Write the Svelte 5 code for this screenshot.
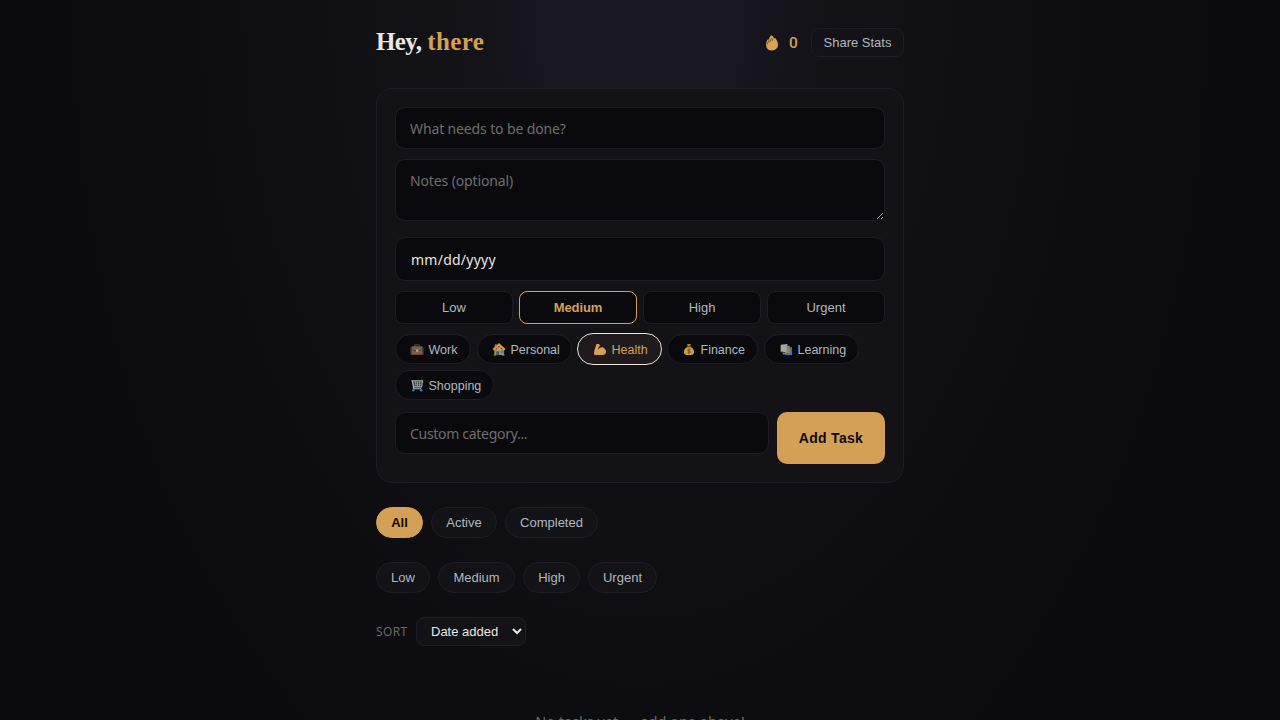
<script>
  const levels = ['Low', 'Medium', 'High', 'Urgent'];
  const levelWidths = [54, 77, 57, 69];
  const categories = [
    { name: 'Work', width: 76 },
    { name: 'Personal', width: 95 },
    { name: 'Health', width: 83 },
    { name: 'Finance', width: 91 },
    { name: 'Learning', width: 95 },
    { name: 'Shopping', width: 99 }
  ];
  const statuses = [
    { name: 'All', width: 47 },
    { name: 'Active', width: 66 },
    { name: 'Completed', width: 93 }
  ];
  let priority = $state('Medium');
  let category = $state('Health');
  let status = $state('All');
  let sort = $state('Date added');
</script>

{#snippet glyph(name)}
  <svg class="glyph" viewBox="0 0 14 14" aria-hidden="true">
    {#if name === 'Work'}
      <path d="M4.5 4V2h5v2" fill="none" stroke="#8a4528" />
      <rect x="1" y="3.5" width="12" height="9" rx="1" fill="#66645c" />
      <path d="M.5 5v7.5M13.5 5v7.5M1 12.5h12" stroke="#8a3e25" />
      <path d="M1 7l5 1.5h2L13 7" fill="none" stroke="#4a4643" />
      <rect x="6" y="7" width="2.5" height="2.5" fill="#d9a04e" />
    {:else if name === 'Personal'}
      <path d="M2.5 1.5h2v3h-2z" fill="#c8792c" />
      <path d="M2 6.5h10.5V13H2z" fill="#95907d" />
      <path d="M.8 7.5L7 1.8l6.2 5.7" fill="none" stroke="#d69540" stroke-width="2.6" />
      <path d="M5 4.5h4V8H5z" fill="#d6a259" />
      <path d="M4 9h3v4H4z" fill="#57544c" />
      <path d="M9 8h3v3H9z" fill="#3386bd" />
      <path d="M1 13h3M10 13h3" stroke="#c08038" />
    {:else if name === 'Health'}
      <path d="M3.2 1.2L6 1l1 2.3-1.8 1.6.2 2C6.5 5 8.5 4 10.5 5c2 .9 2.9 2.4 3 4.5-.1 2.2-1.3 3.4-3.5 3.5H1c-.7-2.2-.2-5 .8-7.6z" fill="#d5a153" />
    {:else if name === 'Finance'}
      <path d="M5 1h4l-.8 2.7H5.8z" fill="#c27a31" />
      <path d="M5.5 4h3C11.7 5.7 13 8 12.3 10.7 11.9 12.5 10.2 13 7 13s-4.9-.5-5.3-2.3C1 8 2.3 5.7 5.5 4z" fill="#d59d45" />
      <path d="M4.5 4h5" stroke="#744019" stroke-width="1.2" />
      <path d="M8.8 7C7 6.3 5.4 6.6 5.5 7.7c.1 1.2 3.1.6 3.2 1.9.1 1.1-1.7 1.5-3.4.8M7 5.8v5.8" fill="none" stroke="#72502a" />
    {:else if name === 'Learning'}
      <path d="M6 4.5h7.5V13H6z" fill="#3579ae" />
      <path d="M1 2.5l3-1v7l-3 1z" fill="#77543e" />
      <path d="M1.5 2l7-.8v7.5l-7 .8z" fill="#9aacae" />
      <path d="M7.5 3H11v8H6V9l1.5-.5z" fill="#bb7941" />
      <path d="M3.5 4h4v6h-4z" fill="#9aacae" />
      <path d="M3 10l3 1v1.5H4z" fill="#698f98" />
    {:else}
      <path d="M1 2h12l-1 6.5H3.5L2 2l1.5 8.5h8" fill="none" stroke="#a9b6b5" stroke-width="1.2" />
      <path d="M5.3 2.5L6 8M7.5 2.5V8M10 2.5L9.5 8M2 4.2h10.5M3 6.3h9" fill="none" stroke="#a9b6b5" stroke-width=".8" />
      <circle cx="3" cy="12.2" r="1.3" fill="#3386bf" />
      <circle cx="11.5" cy="12.2" r="1.3" fill="#3386bf" />
    {/if}
  </svg>
{/snippet}

<main>
  <header>
    <h1>Hey, <span>there</span></h1>
    <div class="stats">
      <svg class="flame" viewBox="0 0 14 16" aria-hidden="true">
        <path d="M6.4.3c1.8 1 2.5 2.2 2.7 3.5l1-1c1.7 2.3 3.1 4.4 2.9 7.3-.2 3.3-2.2 5.2-5.7 5.3-3.8.1-6-1.8-6.2-5-.2-2.8.7-4.8 2.1-6.5l.7 1.2C4.2 3 4.8 1.5 6.4.3z" fill="#d6a152" />
        <path d="M2.6 7.8l1.8-3.2M4.6 7.3l2-4M2 9.5l1-2M7.4 5.8l.4-2.3" fill="none" stroke="#633c18" stroke-width=".7" />
      </svg>
      <b>0</b>
      <button class="share">Share Stats</button>
    </div>
  </header>

  <section class="card">
    <input class="field task" placeholder="What needs to be done?" />
    <textarea class="field notes" placeholder="Notes (optional)"></textarea>
    <div class="field date">mm/dd/yyyy</div>
    <div class="levels">
      {#each levels as level}
        <button class:chosen={priority === level} onclick={() => (priority = level)}>{level}</button>
      {/each}
    </div>
    <div class="chips">
      {#each categories as c}
        <button class:picked={category === c.name} style:width="{c.width}px" onclick={() => (category = c.name)}>
          {@render glyph(c.name)}<span>{c.name}</span>
        </button>
      {/each}
    </div>
    <div class="submit">
      <input class="field custom" placeholder="Custom category..." />
      <button class="add">Add Task</button>
    </div>
  </section>

  <div class="filters">
    {#each statuses as s}
      <button class:on={status === s.name} style:width="{s.width}px" onclick={() => (status = s.name)}>{s.name}</button>
    {/each}
  </div>
  <div class="filters">
    {#each levels as level, i}
      <button style:width="{levelWidths[i]}px">{level}</button>
    {/each}
  </div>
  <div class="sort">
    <span>SORT</span>
    <select bind:value={sort}>
      <option>Date added</option>
      <option>Due date</option>
      <option>Priority</option>
    </select>
  </div>
  <p>No tasks yet — add one above!</p>
</main>

<style>
  :global(html) { background: #0a0a0f; }
  :global(body) { overflow: hidden; }
  :global(#app) {
    height: 720px;
    overflow: hidden;
    background: radial-gradient(ellipse 576px 900px at 50% 0, #1a1822 0%, #191720 14%, #131217 32%, #0a0a0f 100%);
  }
  * { box-sizing: border-box; }
  main {
    width: 528px;
    margin: 0 auto;
    padding-top: 28px;
    font-family: "Noto Sans", sans-serif;
    color: #e8e6e1;
  }
  header { display: flex; justify-content: space-between; align-items: center; height: 29px; margin-bottom: 31px; }
  h1 { margin: 0; font: 700 25px/27px "Liberation Serif", serif; height: 29px; letter-spacing: -.6px; color: #eae8e0; }
  h1 span { color: #d4a055; letter-spacing: .4px; }
  .stats { display: flex; align-items: center; color: #d4a055; }
  .flame { width: 14px; height: 16px; margin-right: 10px; }
  .stats b { font: 500 15.5px/16px Roboto, sans-serif; width: 9px; margin-right: 13px; }
  button { font: 13px "Liberation Sans", sans-serif; color: #afb8c0; padding: 0; border: 1px solid #1e1d26; background: #131217; white-space: nowrap; }
  .share { width: 93px; height: 29px; border-radius: 8px; }
  .card { height: 395px; border: 1px solid #1e1d27; border-radius: 16px; background: #131217; padding: 18px; }
  .field {
    display: block; width: 100%; margin: 0; padding: 0 14px; border: 1px solid #1e1d27; border-radius: 10px;
    background: #0a0a0e; color: #e8e6e1; outline: none; font: 14px "Noto Sans", sans-serif; letter-spacing: -.13px;
  }
  .field::placeholder { color: #6f6d6b; opacity: 1; }
  .task { height: 42px; }
  .notes { height: 62px; margin-top: 10px; padding-top: 11px; line-height: 20px; resize: vertical; }
  .date { height: 44px; line-height: 43px; margin-top: 16px; padding-left: 15px; letter-spacing: .25px; }
  .levels { display: grid; grid-template-columns: repeat(4, 1fr); gap: 6px; margin-top: 10px; }
  .levels button { height: 33px; border-radius: 8px; background: #0a0a0e; }
  .levels .chosen { border-color: #d4a055; color: #d4a055; font-weight: 700; letter-spacing: -.1px; }
  .chips { display: flex; flex-wrap: wrap; gap: 6px; margin-top: 10px; }
  .chips button { display: flex; align-items: center; height: 30px; padding: 1px 0 0 13px; border-radius: 15px; background: #0a0a0e; font-size: 12.5px; }
  .glyph { width: 14px; height: 13px; margin-right: 5px; margin-left: .5px; flex: none; }
  .chips .picked { color: #d4a055; background: #211a1d; border-color: #211a1d; outline: 1px solid #eae8e0; }
  .submit { display: flex; align-items: flex-start; gap: 8px; margin-top: 12px; }
  .custom { width: 374px; height: 42px; padding-top: 1px; letter-spacing: -.3px; }
  .add { width: 108px; height: 52px; border: 0; border-radius: 10px; background: #d4a055; color: #0a0a0e; font-size: 14px; font-weight: 700; letter-spacing: .3px; }
  .filters { display: flex; gap: 8px; margin-top: 24px; }
  .filters button { height: 31px; border-radius: 16px; }
  .filters .on { background: #d4a055; border-color: #d4a055; color: #0a0a0e; font-weight: 700; }
  .sort { display: flex; align-items: center; gap: 8px; margin-top: 24px; height: 29px; }
  .sort span { width: 32px; font-size: 12px; letter-spacing: .4px; color: #6b6966; }
  select { width: 110px; height: 29px; padding: 0 0 0 10px; border: 1px solid #1e1d27; border-radius: 8px; background: #131217; color: #e8e6e1; font: 13px "Liberation Sans", sans-serif; }
  p { margin: 63px 0 0; text-align: center; font-size: 14.5px; line-height: 24px; color: #6b6966; }
</style>
